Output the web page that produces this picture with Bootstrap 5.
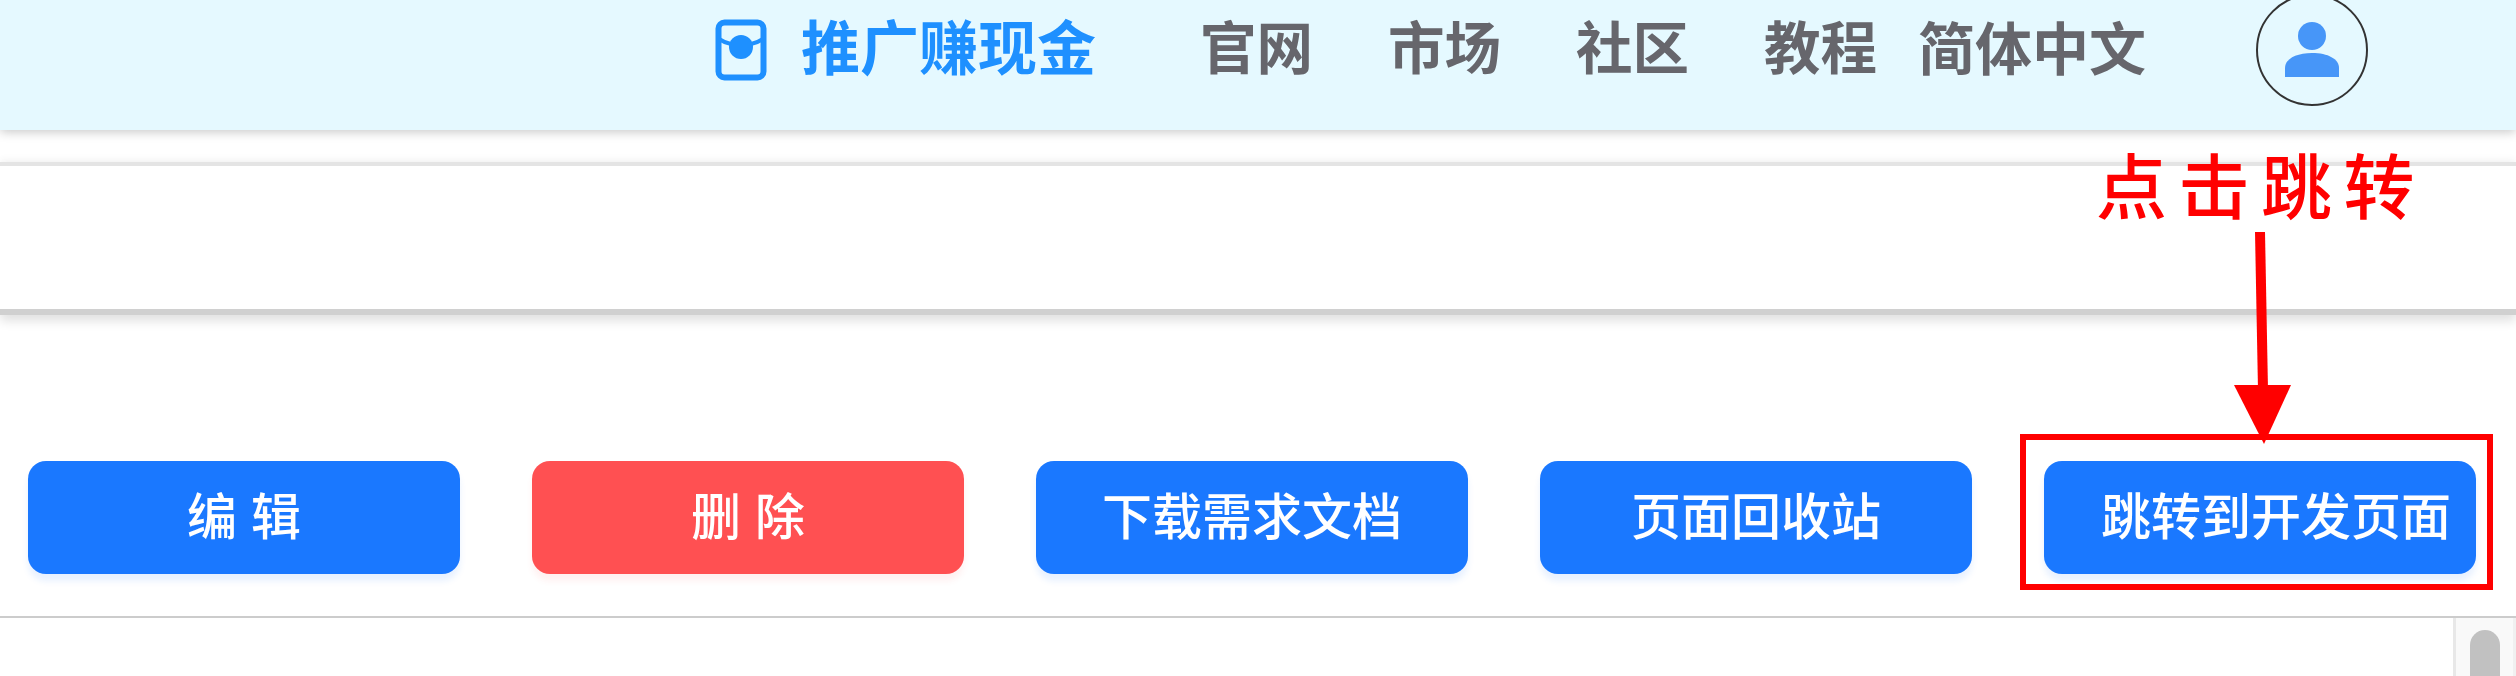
<!DOCTYPE html>
<html lang="zh-CN">
<head>
    <meta charset="UTF-8">
    <title>推广赚现金</title>
    <link href="https://cdn.jsdelivr.net/npm/bootstrap@5.3.3/dist/css/bootstrap.min.css" rel="stylesheet">
    <style>
        html, body { height: 676px; overflow: hidden; }
        body {
            position: relative;
            font-family: "Liberation Sans", "Noto Sans CJK SC", sans-serif;
            background: #fff;
        }
        .top-bar {
            height: 130px;
            padding: 0 148px 30px 0;
            background: #e5f9ff;
            box-shadow: 0 2px 10px rgba(0, 0, 0, .22);
            position: relative;
            z-index: 2;
        }
        .promo-link { color: #1e90ff; font-size: 59px; font-weight: 700; line-height: 1; margin-right: 104px; }
        .promo-link svg { width: 52px; height: 62px; margin-right: 34px; }
        .top-link { color: #66666c; font-size: 56.5px; font-weight: 700; line-height: 1; text-decoration: none; }
        .top-link + .top-link { margin-left: 75px; }
        .top-link.lang-link { margin-left: 41px; font-size: 57px; }
        .avatar-ring {
            width: 112px;
            height: 112px;
            margin-left: 110px;
            border: 2px solid #333;
            border-radius: 50%;
            flex: none;
        }
        .tab-strip {
            height: 153px;
            margin-top: 32px;
            border-top: 4px solid #e4e4e4;
            border-bottom: 6px solid #d0d0d0;
            box-shadow: 0 6px 10px rgba(0, 0, 0, .12), 0 -4px 6px rgba(0, 0, 0, .03);
        }
        .action-bar {
            height: 303px;
            padding: 0 40px 42px 28px;
            border-bottom: 2px solid #ccc;
        }
        .action-btn {
            width: 432px;
            height: 113px;
            border: 0;
            border-radius: 18px;
            color: #fff;
            font-size: 50px;
            font-weight: 500;
            line-height: 1;
            padding: 0;
            background: #1a78ff;
            box-shadow: 0 7px 6px rgba(26, 120, 255, .1);
        }
        .action-btn.btn-del { background: #ff5052; box-shadow: 0 7px 6px rgba(255, 80, 82, .08); }
        .action-btn.btn-jump { text-align: left; padding-left: 57px; }
        .content-row { height: 58px; }
        .fake-scroll {
            width: 63px;
            padding: 12px 13px 0 14px;
            background: #f9f9f9;
            border-left: 3px solid #e8e8e8;
            border-right: 3px solid #f0f0f0;
        }
        .fake-thumb { height: 60px; background: #c1c1c1; border-radius: 16px 16px 0 0; }
        .note-text {
            position: absolute;
            left: 2096px;
            top: 147px;
            z-index: 3;
            color: #f00;
            font-size: 71px;
            font-weight: 500;
            line-height: 84px;
            letter-spacing: 11.5px;
            white-space: nowrap;
        }
        .note-arrow { position: absolute; left: 2220px; top: 230px; z-index: 3; }
        .note-box {
            position: absolute;
            left: 2020px;
            top: 434px;
            width: 473px;
            height: 156px;
            border: 6px solid #f00;
            z-index: 2;
        }
    </style>
</head>
<body>

    <!-- Top bar -->
    <header class="top-bar d-flex justify-content-end align-items-center">
        <div class="promo-link d-flex align-items-center">
            <svg viewBox="0 0 52 62" fill="none">
                <rect x="3.5" y="3.5" width="45" height="55" rx="6" stroke="#1e90ff" stroke-width="6"/>
                <path d="M4 20Q10 24 16 25M48 20Q42 24 36 25" stroke="#1e90ff" stroke-width="4"/>
                <circle cx="26" cy="28" r="12" fill="#1e90ff"/>
            </svg>
            <span>推广赚现金</span>
        </div>
        <a class="top-link" href="#">官网</a>
        <a class="top-link" href="#">市场</a>
        <a class="top-link" href="#">社区</a>
        <a class="top-link" href="#">教程</a>
        <a class="top-link lang-link" href="#">简体中文</a>
        <div class="avatar-ring d-flex align-items-center justify-content-center">
            <svg width="56" height="56" viewBox="0 0 56 56">
                <ellipse cx="28" cy="14" rx="14" ry="14" fill="#4796f8"/>
                <path d="M1 55V46C1 37 12 31 28 31S55 37 55 46V55Z" fill="#4796f8"/>
            </svg>
        </div>
    </header>

    <div class="tab-strip"></div>

    <!-- Buttons -->
    <div class="action-bar d-flex justify-content-between align-items-end">
        <button class="action-btn" type="button">编 辑</button>
        <button class="action-btn btn-del" type="button">删 除</button>
        <button class="action-btn" type="button">下载需求文档</button>
        <button class="action-btn" type="button">页面回收站</button>
        <button class="action-btn btn-jump" type="button">跳转到开发页面</button>
    </div>

    <div class="content-row d-flex justify-content-end">
        <div class="fake-scroll"><div class="fake-thumb"></div></div>
    </div>

    <!-- Annotation on top of the screenshot -->
    <div class="note-text">点击跳转</div>
    <svg class="note-arrow" width="90" height="216" viewBox="0 0 90 216">
        <path d="M40 2L43 160" stroke="#f00" stroke-width="10" fill="none"/>
        <path d="M14 155H71L44 214Z" fill="#f00"/>
    </svg>
    <div class="note-box"></div>

    <script src="https://cdn.jsdelivr.net/npm/bootstrap@5.3.3/dist/js/bootstrap.bundle.min.js"></script>
</body>
</html>
